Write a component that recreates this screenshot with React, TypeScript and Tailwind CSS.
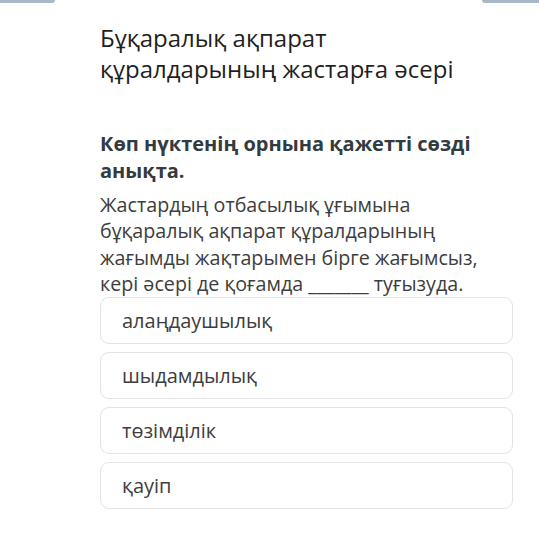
export default function App() {
  const options = ['алаңдаушылық', 'шыдамдылық', 'төзімділік', 'қауіп'];

  return (
    <div className="relative w-[539px] h-[540px] bg-white overflow-hidden" style={{ fontFamily: '"Open Sans", "Noto Sans", sans-serif' }}>
      <div className="absolute left-0 top-0 w-[55px] h-[3px] bg-[#a9b8c6] rounded-br-md" />
      <div className="absolute right-0 top-0 w-[57px] h-[3px] bg-[#a9b8c6] rounded-bl-md" />

      <div className="pl-[100px] pr-[26px] pt-[22px]">
        <h1 className="text-[24px] leading-[31px] text-[#1f1f1f] font-normal">
          Бұқаралық ақпарат
          <br />
          құралдарының жастарға әсері
        </h1>

        <p className="mt-[46px] text-[20px] leading-[27px] font-bold text-[#333a40]">
          Көп нүктенің орнына қажетті сөзді
          <br />
          анықта.
        </p>

        <p className="mt-[8px] text-[19.7px] leading-[26.3px] text-[#3d3d3d] whitespace-nowrap">
          Жастардың отбасылық ұғымына
          <br />
          бұқаралық ақпарат құралдарының
          <br />
          жағымды жақтарымен бірге жағымсыз,
          <br />
          кері әсері де қоғамда _______ туғызуда.
        </p>

        <div className="mt-0 flex flex-col gap-[8px]">
          {options.map((o) => (
            <div
              key={o}
              className="h-[47px] flex items-center px-[21px] border border-[#e3e3e3] rounded-[9px] text-[20px] text-[#3d3d3d]"
            >
              {o}
            </div>
          ))}
        </div>
      </div>
    </div>
  );
}
